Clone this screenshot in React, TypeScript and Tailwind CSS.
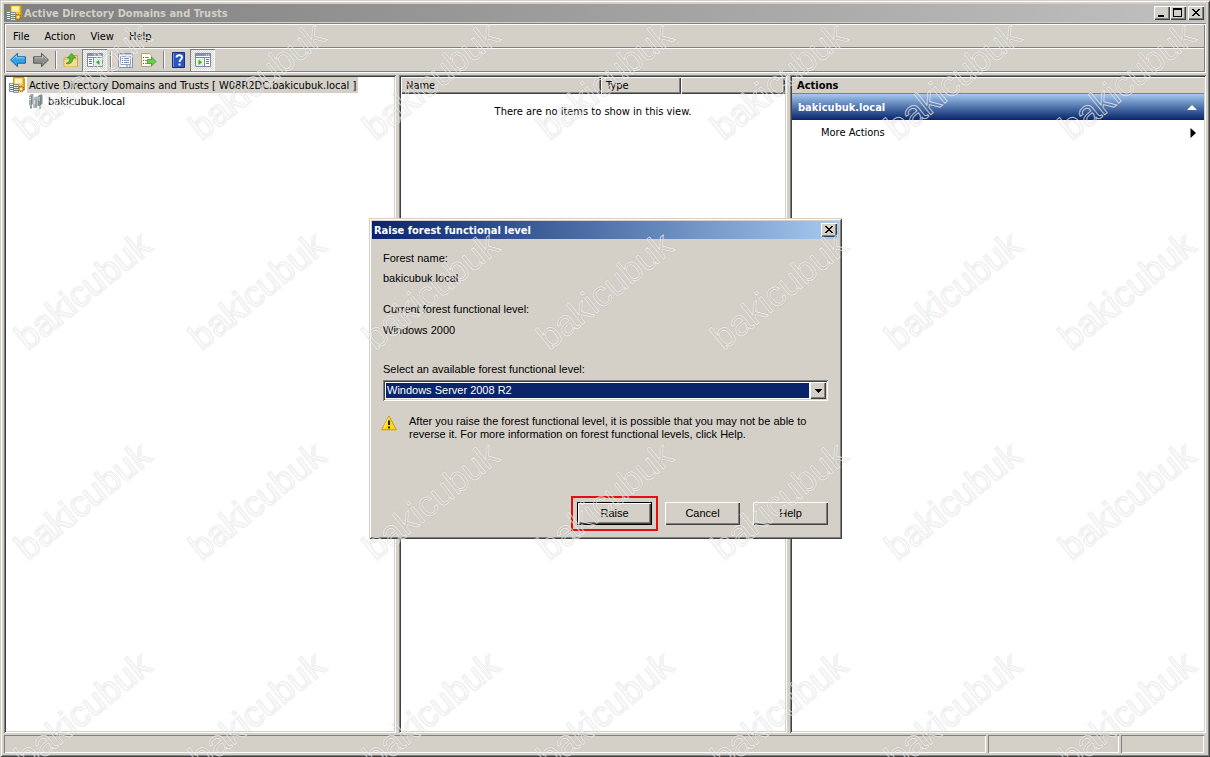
import { useId, useState, type ReactNode } from 'react'

const UI_FONT = "font-['Tahoma','DejaVu_Sans_Condensed','DejaVu_Sans',sans-serif]"
const DIALOG_FONT = "font-['Liberation_Sans',Arial,sans-serif]"

const WINDOW_FRAME =
  'shadow-[inset_1px_1px_0_#d4d0c8,inset_-1px_-1px_0_#404040,inset_2px_2px_0_#ffffff,inset_-2px_-2px_0_#808080]'
const RAISED = 'shadow-[inset_1px_1px_0_#ffffff,inset_-1px_-1px_0_#404040,inset_-2px_-2px_0_#808080]'
const SUNKEN =
  'shadow-[inset_1px_1px_0_#808080,inset_-1px_-1px_0_#ffffff,inset_2px_2px_0_#404040,inset_-2px_-2px_0_#d4d0c8]'
const SUNKEN_THIN = 'shadow-[inset_1px_1px_0_#808080,inset_-1px_-1px_0_#ffffff]'
const GROOVE =
  'shadow-[inset_1px_1px_0_#808080,inset_-1px_-1px_0_#ffffff,inset_2px_2px_0_#ffffff,inset_-2px_-2px_0_#808080]'

const MENUS = ['File', 'Action', 'View', 'Help']

const LEVELS = ['Windows Server 2008 R2', 'Windows Server 2008', 'Windows Server 2003']

const WATERMARKS = Array.from({ length: 28 }, (_, i) => i)

function Icon({ children }: { children: ReactNode }) {
  return (
    <svg viewBox="0 0 16 16" className="size-4 shrink-0" aria-hidden="true">
      {children}
    </svg>
  )
}

function DomainsIcon() {
  return (
    <Icon>
      <path d="M4.500 0.500h10l1 1V13h-11z" fill="#f3c93c" stroke="#b98a17" strokeWidth="0.800" />
      <path d="M6 1.500h7v5H6z" fill="#fff3b5" />
      <path d="M14.500 1v11" stroke="#d9a520" />
      <path d="M0.500 6.500h4v8h-4zM4.500 7.500h5v8h-5z" fill="#eef2f4" stroke="#6c7f8c" strokeWidth="0.800" />
      <path d="M1 8.500h3M1 10.500h3M1 12.500h3M5 9.500h4M5 11.500h4M5 13.500h4" stroke="#5c7f6a" />
      <path d="M7 8v7.500" stroke="#8ea0ac" strokeWidth="0.800" />
      <circle cx="12" cy="12" r="2.600" fill="#f4b62c" stroke="#9a6812" strokeWidth="1.400" strokeDasharray="1.200 0.800" />
      <circle cx="12" cy="12" r="1" fill="#fff" />
    </Icon>
  )
}

function DomainIcon() {
  return (
    <Icon>
      <path d="M1 3l2-2h2.500v9l-2 2.500H1z" fill="#a0a9ab" />
      <path d="M10 3l2-1.500h2.500v9L12 13h-2z" fill="#869193" />
      <path d="M5 6l2-2.500h3v9L8 15H5z" fill="#b3bdbe" />
      <path d="M3.500 3v9M8 6v9M12.500 3.500v9" stroke="#737e80" strokeWidth="0.800" />
      <path d="M1.500 4.500H3M1.500 6.500H3M5.500 8h2M5.500 10h2M10.500 5H12M10.500 7H12" stroke="#eef2f2" />
      <path d="M2 15.500h2v-3H2zM11 15.500h2v-3h-2z" fill="#7fa08a" />
    </Icon>
  )
}

function BackIcon() {
  return (
    <Icon>
      <path d="M0.600 8L7.500 1.300v3.500h7.900v6.400H7.500v3.500z" fill="#2fa4ea" stroke="#1c5f9c" strokeLinejoin="round" />
      <path d="M2.500 7.600L6.500 3.600v2.200h8" fill="none" stroke="#8fd6fb" />
    </Icon>
  )
}

function ForwardIcon() {
  return (
    <Icon>
      <path d="M15.400 8L8.500 1.300v3.500H0.600v6.400h7.900v3.500z" fill="#8e8e8e" stroke="#565656" strokeLinejoin="round" />
      <path d="M1.600 5.800h7.900V3.600l4 4" fill="none" stroke="#c2c2c2" />
    </Icon>
  )
}

function UpFolderIcon() {
  return (
    <Icon>
      <path d="M1 6.500l1-1h5l1-2h6.500v11H1z" fill="#eecb72" stroke="#c09a43" strokeWidth="0.800" />
      <path d="M1.500 8h12.500v6.500H1.500z" fill="#f7dd94" />
      <path d="M3 11.500c3-1 4-3 4-5.500H4.500L8.700 1.500 12.500 6H10c0 4-2.500 6.500-7 5.500z" fill="#52bf35" stroke="#2d8420" strokeWidth="0.700" />
    </Icon>
  )
}

function TreePaneIcon() {
  return (
    <Icon>
      <path d="M0.500 1.500h15v13h-15z" fill="#fff" stroke="#7a89a3" />
      <path d="M1 2h14v2H1z" fill="#8194b5" />
      <path d="M11 3h1M13 3h1" stroke="#fff" />
      <path d="M1 5.500h14M6.500 6v8" stroke="#7a89a3" />
      <path d="M2 7.500h3M2 9.500h3M2 11.500h3" stroke="#5f7396" />
      <path d="M7.500 6.500h7v7.500h-7z" fill="#dff3dc" />
      <path d="M12.500 7.500v5.500L9 10.200z" fill="#3ea53a" />
    </Icon>
  )
}

function ActionPaneIcon() {
  return (
    <Icon>
      <path d="M0.500 1.500h15v13h-15z" fill="#fff" stroke="#7a89a3" />
      <path d="M1 2h14v2H1z" fill="#8194b5" />
      <path d="M11 3h1M13 3h1" stroke="#fff" />
      <path d="M1 5.500h14M9.500 6v8" stroke="#7a89a3" />
      <path d="M11 7.500h3M11 9.500h3M11 11.500h3" stroke="#5f7396" />
      <path d="M1.500 6.500h7v7.500h-7z" fill="#dff3dc" />
      <path d="M3.500 7.500v5.500L7 10.200z" fill="#3ea53a" />
    </Icon>
  )
}

function PropertiesIcon() {
  return (
    <Icon>
      <path d="M0.500 1.500h14v14h-14z" fill="#f7f9fc" stroke="#8994a8" />
      <path d="M1 2.500h13" stroke="#b9c3d6" />
      <path d="M2.500 4.500h10v8h-10z" fill="#fff" stroke="#8ea0bf" />
      <path d="M4 6.500h1M4 8.500h1M4 10.500h1" stroke="#4f6e9f" />
      <path d="M6 6.500h5M6 8.500h5M6 10.500h5" stroke="#7086a8" />
      <path d="M8 14h2M11 14h2" stroke="#7086a8" />
    </Icon>
  )
}

function ExportIcon() {
  return (
    <Icon>
      <path d="M0.500 1.500h8l2 2v11h-10z" fill="#fffdf0" stroke="#b5a26a" />
      <path d="M2 5.500h1M2 8.500h1M2 11.500h1" stroke="#555" />
      <path d="M4 5.500h4M4 8.500h3M4 11.500h3" stroke="#8a8a8a" />
      <path d="M6.500 7.500h4V5L15 9.500 10.500 14v-2.500h-4z" fill="#6fcd45" stroke="#3b962a" strokeWidth="0.800" />
    </Icon>
  )
}

function HelpIcon() {
  return (
    <Icon>
      <path d="M1.500 0.500h12v15h-12z" fill="#2c55c4" stroke="#1b2f74" />
      <path d="M2.500 1v14" stroke="#6e8ee0" />
      <path d="M5.500 5.500c0-3 5.500-3 5.500 0 0 2-2.500 2-2.500 4.500" fill="none" stroke="#fff" strokeWidth="1.800" />
      <path d="M7.500 11.500h2v2h-2z" fill="#fff" />
    </Icon>
  )
}

function WarningIcon() {
  return (
    <Icon>
      <path d="M8 1L15.400 14.800H0.600z" fill="#fbd913" stroke="#c79a09" strokeLinejoin="round" />
      <path d="M8 2.500L3 12" stroke="#fff29a" />
      <path d="M8 5.500v4.500M8 11.500v2" stroke="#111" strokeWidth="1.800" />
    </Icon>
  )
}

function CaptionButton({ label, children }: { label: string; children: ReactNode }) {
  return (
    <button aria-label={label} className={`flex h-3.5 w-4 items-center justify-center bg-[#d4d0c8] ${RAISED}`}>
      <svg viewBox="0 0 16 14" className="h-3.5 w-4" shapeRendering="crispEdges" aria-hidden="true">
        {children}
      </svg>
    </button>
  )
}

function CloseGlyph() {
  return <path d="M4 3h2v1h1v1h2V4h1V3h2v1h-1v1h-1v1H9v1h1v1h1v1h1v1h-2V9H9V8H7v1H6v1H4V9h1V8h1V7h1V6H6V5H5V4H4z" fill="#000" />
}

function ToolButton({ label, pressed, children }: { label: string; pressed?: boolean; children: ReactNode }) {
  return (
    <button
      aria-label={label}
      aria-pressed={pressed}
      className={`flex h-[22px] items-center justify-center ${
        pressed
          ? 'w-[25px] bg-[conic-gradient(#ffffff_25%,#d4d0c8_0_50%,#ffffff_0_75%,#d4d0c8_0)] bg-size-[2px_2px] ' +
            SUNKEN_THIN
          : 'w-[23px]'
      }`}
    >
      {children}
    </button>
  )
}

function ToolSeparator() {
  return <span className="mr-0.5 ml-[3px] h-[18px] w-0.5 border-l border-r border-l-[#808080] border-r-white" />
}

function MenuAndToolbar() {
  return (
    <div className={`mt-px p-0.5 ${GROOVE}`}>
      <nav className="flex h-[22px] items-center gap-px pt-px">
        {MENUS.map((menu) => (
          <button key={menu} className="px-[7px]">
            {menu}
          </button>
        ))}
      </nav>
      <div className="h-0.5 border-t border-b border-t-[#808080] border-b-white" />
      <div className="flex h-[22px] items-center" role="toolbar">
        <ToolButton label="Back">
          <BackIcon />
        </ToolButton>
        <ToolButton label="Forward">
          <ForwardIcon />
        </ToolButton>
        <ToolSeparator />
        <ToolButton label="Up one level">
          <UpFolderIcon />
        </ToolButton>
        <ToolButton label="Show/Hide console tree" pressed>
          <TreePaneIcon />
        </ToolButton>
        <ToolSeparator />
        <ToolButton label="Properties">
          <PropertiesIcon />
        </ToolButton>
        <ToolButton label="Export list">
          <ExportIcon />
        </ToolButton>
        <ToolSeparator />
        <ToolButton label="Help">
          <HelpIcon />
        </ToolButton>
        <ToolButton label="Show/Hide action pane" pressed>
          <ActionPaneIcon />
        </ToolButton>
      </div>
    </div>
  )
}

function TreePane() {
  return (
    <ul role="tree" className={`min-w-0 bg-white p-0.5 ${SUNKEN}`}>
      <li role="treeitem" aria-selected="true">
        <div className="flex h-4 items-center gap-0.5 pl-[3px]">
          <DomainsIcon />
          <span className="h-4 truncate bg-[#d4d0c8] px-0.5 leading-[18px]">
            Active Directory Domains and Trusts [ W08R2DC.bakicubuk.local ]
          </span>
        </div>
        <ul role="group">
          <li role="treeitem" className="flex h-4 items-center gap-1 pl-[22px]">
            <DomainIcon />
            <span className="h-4 leading-[18px]">bakicubuk.local</span>
          </li>
        </ul>
      </li>
    </ul>
  )
}

function ListPane() {
  const th = `h-[17px] bg-[#d4d0c8] px-[5px] text-left font-normal ${RAISED}`
  return (
    <div className={`min-w-0 bg-white p-0.5 ${SUNKEN}`}>
      <table className="w-full table-fixed border-collapse">
        <thead>
          <tr>
            <th className={`w-[200px] pt-px ${th}`}>Name</th>
            <th className={`w-20 pt-px ${th}`}>Type</th>
            <th className={th} aria-label="Description" />
          </tr>
        </thead>
        <tbody>
          <tr>
            <td colSpan={3} className="pt-2.5 text-center">
              There are no items to show in this view.
            </td>
          </tr>
        </tbody>
      </table>
    </div>
  )
}

function ActionsPane() {
  return (
    <aside className={`min-w-0 bg-white p-0.5 ${SUNKEN}`}>
      <h2 className="h-[17px] border-b border-[#808080] bg-[#d4d0c8] px-[5px] pt-px font-bold shadow-[inset_0_1px_0_#ffffff]">
        Actions
      </h2>
      <button className="flex h-[26px] w-full items-center justify-between bg-linear-to-b from-[#a6caf0] to-[#0a246a] pt-px pr-[7px] pl-1.5 font-bold text-white">
        bakicubuk.local
        <svg viewBox="0 0 10 5" className="h-[5px] w-2.5" aria-hidden="true">
          <path d="M5 0l5 5H0z" fill="#fff" />
        </svg>
      </button>
      <button className="flex h-6 w-full items-center justify-between pt-px pr-2 pl-[29px]">
        More Actions
        <svg viewBox="0 0 6 10" className="h-2.5 w-1.5" aria-hidden="true">
          <path d="M0.500 0L6 5 0.500 10z" fill="#000" />
        </svg>
      </button>
    </aside>
  )
}

function RaiseLevelDialog() {
  const selectId = useId()
  const titleId = useId()
  const [level, setLevel] = useState(LEVELS[0])
  const button = 'h-[23px] w-[75px] bg-[#d4d0c8]'

  return (
    <section
      role="dialog"
      aria-labelledby={titleId}
      className={`absolute top-[218px] left-[369px] w-[473px] bg-[#d4d0c8] p-[3px] ${WINDOW_FRAME}`}
    >
      <header className="flex h-[18px] items-center justify-between bg-linear-to-r from-[#0a246a] to-[#a6caf0] px-0.5">
        <h1 id={titleId} className="pt-px font-bold text-white">
          Raise forest functional level
        </h1>
        <CaptionButton label="Close">
          <CloseGlyph />
        </CaptionButton>
      </header>
      <div className={`px-[11px] pt-[13px] pb-[11px] leading-[13px] ${DIALOG_FONT}`}>
        <p>Forest name:</p>
        <p className="mt-[7px]">bakicubuk.local</p>
        <p className="mt-[18px]">Current forest functional level:</p>
        <p className="mt-2">Windows 2000</p>
        <label htmlFor={selectId} className="mt-[26px] block">
          Select an available forest functional level:
        </label>
        <div className={`relative mt-1 bg-white p-[3px] ${SUNKEN}`}>
          <select
            id={selectId}
            value={level}
            onChange={(e) => setLevel(e.target.value)}
            className="block h-[15px] w-full appearance-none bg-[#0a246a] pl-px leading-[15px] text-white outline-none"
          >
            {LEVELS.map((name) => (
              <option key={name}>{name}</option>
            ))}
          </select>
          <span className="pointer-events-none absolute inset-y-0.5 right-0.5 flex border-l border-white">
            <span className={`flex w-4 items-center justify-center bg-[#d4d0c8] ${RAISED}`}>
              <svg viewBox="0 0 7 4" className="h-1 w-[7px]" shapeRendering="crispEdges" aria-hidden="true">
                <path d="M0 0h7v1H6v1H5v1H4v1H3V3H2V2H1V1H0z" fill="#000" />
              </svg>
            </span>
          </span>
        </div>
        <div className="mt-3.5 flex gap-3">
          <span className="-ml-0.5">
            <WarningIcon />
          </span>
          <p className="max-w-[400px]">
            After you raise the forest functional level, it is possible that you may not be able to reverse it. For more
            information on forest functional levels, click Help.
          </p>
        </div>
        <div className="mt-[61px] flex justify-end gap-[13px]">
          <button
            className={`${button} border border-black outline-2 outline-offset-4 outline-[#e60f0f] ${RAISED}`}
          >
            Raise
          </button>
          <button className={`${button} ${RAISED}`}>Cancel</button>
          <button className={`${button} ${RAISED}`}>Help</button>
        </div>
      </div>
    </section>
  )
}

// grey outline underneath, thinner white outline on top of it
function Watermarks() {
  return (
    <div aria-hidden="true" className="pointer-events-none absolute inset-0 overflow-hidden">
      <div className="-mt-6 -ml-1 grid auto-rows-[210px] grid-cols-[repeat(7,174px)]">
        {WATERMARKS.map((i) => (
          <span key={i} className="flex items-center justify-center">
            <span
              data-text="bakicubuk"
              className="relative -rotate-[39deg] font-['Liberation_Sans',Arial,sans-serif] text-[36px] leading-none text-transparent [-webkit-text-stroke:2px_rgba(0,0,0,0.1)] before:absolute before:inset-0 before:content-[attr(data-text)] before:[-webkit-text-stroke:1px_rgba(255,255,255,0.7)]"
            >
              bakicubuk
            </span>
          </span>
        ))}
      </div>
    </div>
  )
}

export default function App() {
  return (
    <div
      className={`relative flex h-screen flex-col overflow-hidden bg-[#d4d0c8] p-1 text-[11px] leading-4 text-black ${UI_FONT} ${WINDOW_FRAME}`}
    >
      <header className="flex h-[18px] shrink-0 items-center bg-linear-to-r from-[#808080] to-[#c0c0c0] px-0.5">
        <DomainsIcon />
        <h1 className="ml-0.5 flex-1 pt-px font-bold text-[#d4d0c8]">Active Directory Domains and Trusts</h1>
        <CaptionButton label="Minimize">
          <path d="M4 9h6v2H4z" fill="#000" />
        </CaptionButton>
        <CaptionButton label="Maximize">
          <path d="M3 2h9v9H3zM4 4v6h7V4z" fill="#000" fillRule="evenodd" />
        </CaptionButton>
        <span className="w-0.5" />
        <CaptionButton label="Close">
          <CloseGlyph />
        </CaptionButton>
      </header>
      <MenuAndToolbar />
      <main className="mt-0.5 grid min-h-0 flex-1 grid-cols-[392fr_388fr_416fr] gap-[3px]">
        <TreePane />
        <ListPane />
        <ActionsPane />
      </main>
      <footer className="mt-0.5 flex h-[18px] shrink-0 gap-0.5 pr-0.5">
        <span className={`flex-1 ${SUNKEN_THIN}`} />
        <span className={`w-[131px] ${SUNKEN_THIN}`} />
        <span className={`w-[83px] ${SUNKEN_THIN}`} />
      </footer>
      <RaiseLevelDialog />
      <Watermarks />
    </div>
  )
}
